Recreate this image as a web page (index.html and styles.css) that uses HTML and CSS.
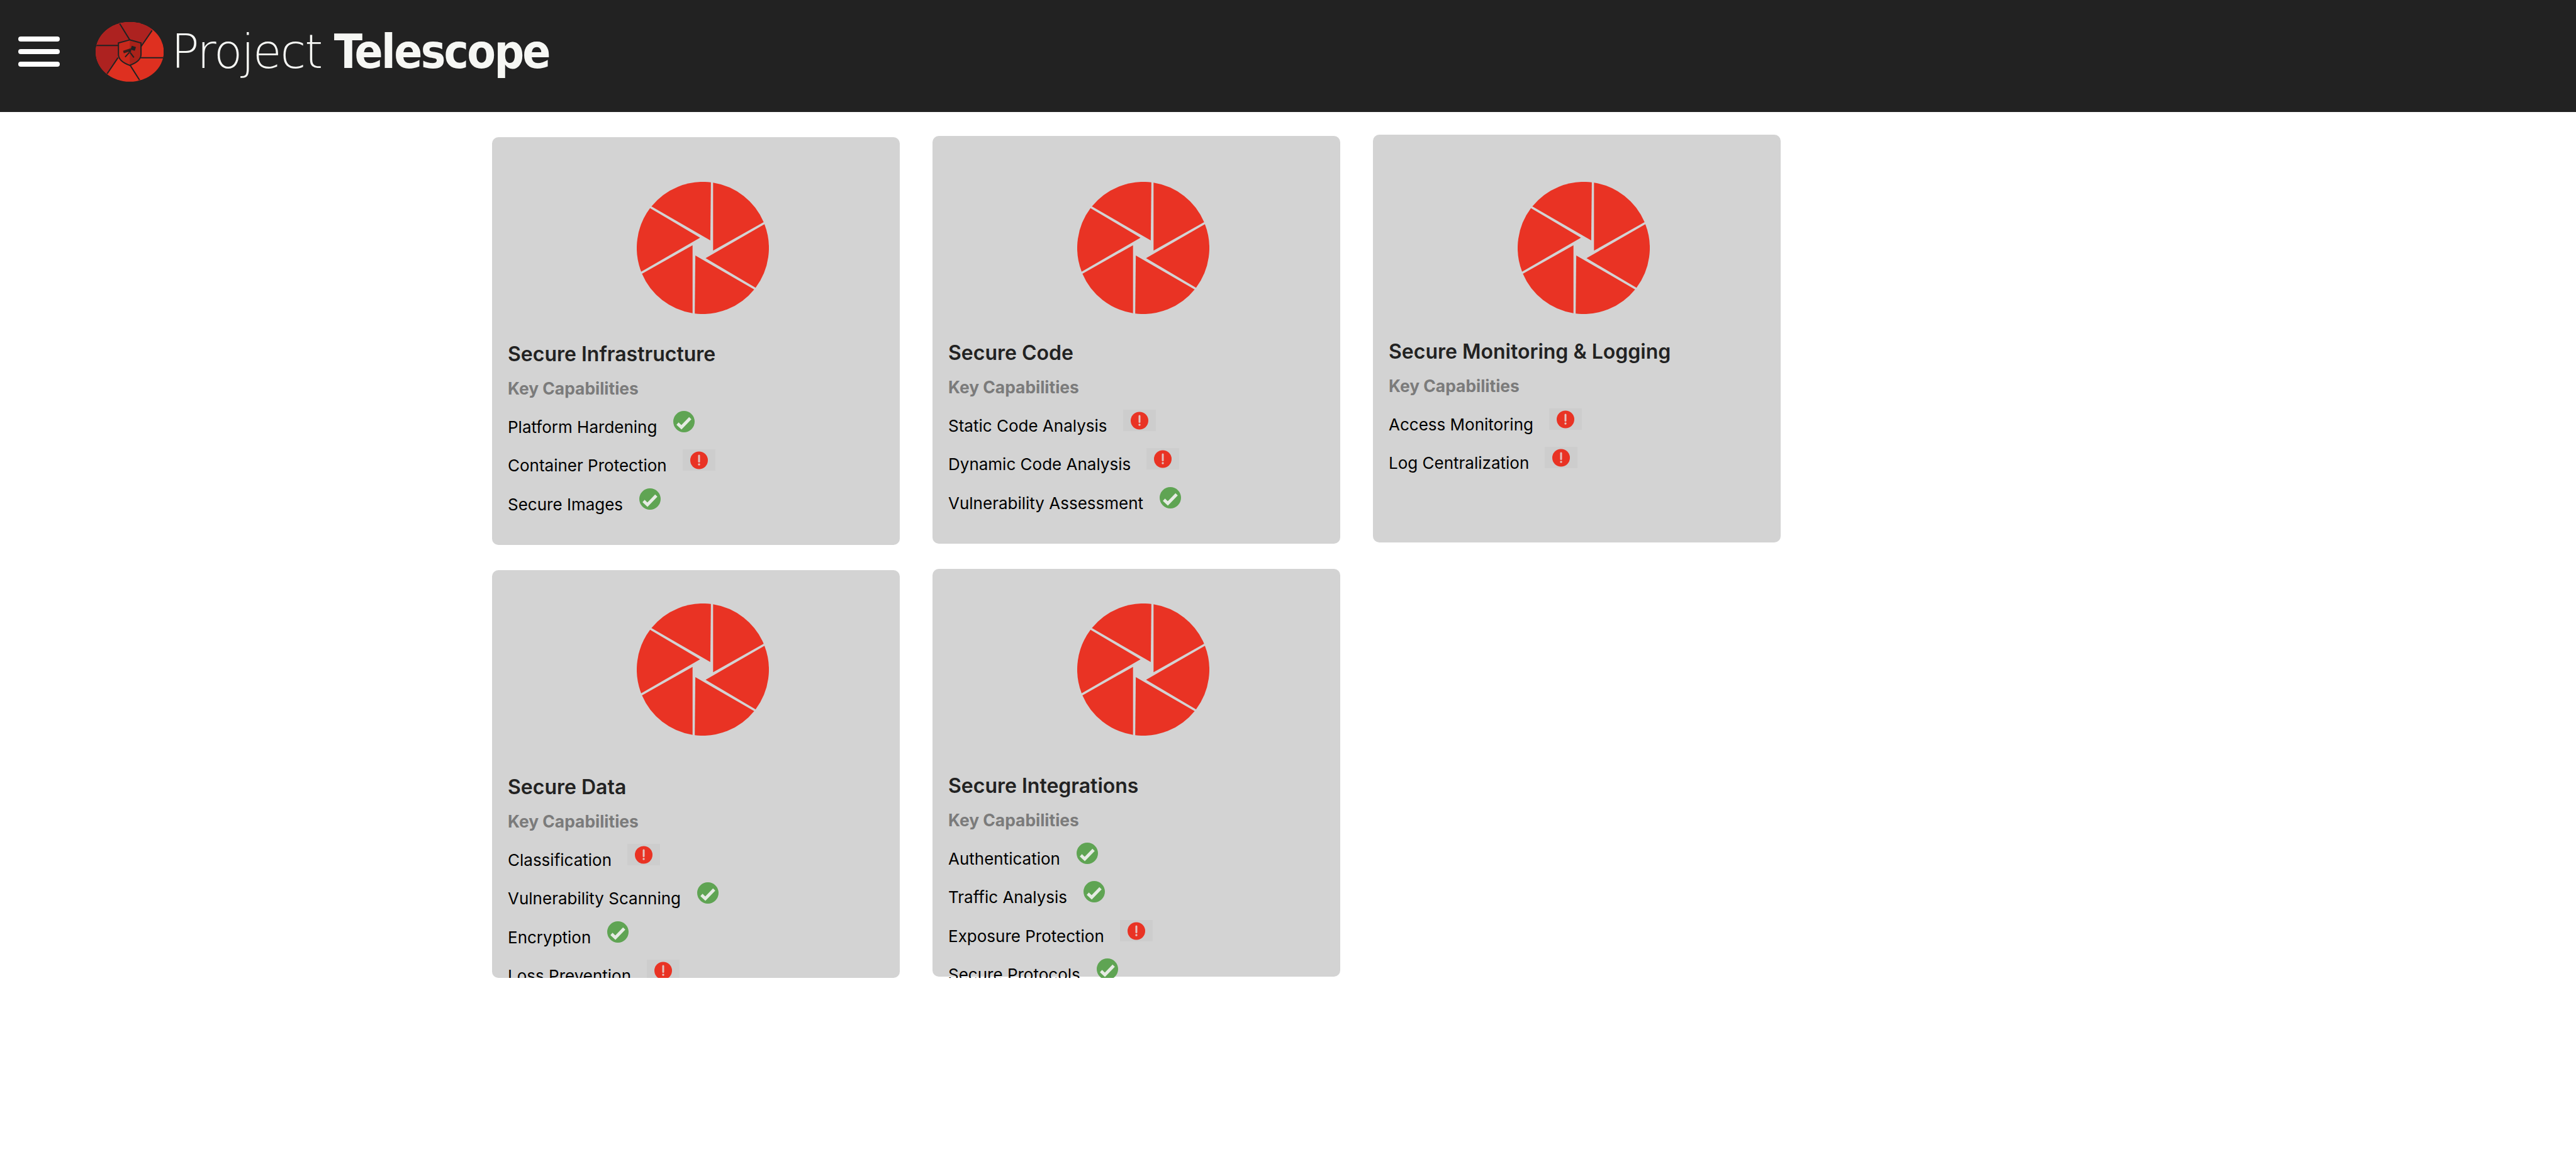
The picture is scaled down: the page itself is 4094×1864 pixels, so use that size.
FILE: index.html
```html
<!DOCTYPE html>
<html lang="en">
<head>
  <meta charset="UTF-8">
  <meta name="viewport" content="width=device-width, initial-scale=1.0">
  <title>Project Telescope</title>
  <link rel="stylesheet" href="styles.css">
</head>
<body>
  <!-- shared icons -->
  <svg class="icon-defs" aria-hidden="true">
    <symbol id="blade" viewBox="-105 -105 210 210">
      <path id="bladeShape" d="M16.3 4.3V-103.7A105 105 0 0 1 96.7 -41Z"/>
      <use href="#bladeShape" transform="rotate(60)"/>
      <use href="#bladeShape" transform="rotate(120)"/>
      <use href="#bladeShape" transform="rotate(180)"/>
      <use href="#bladeShape" transform="rotate(240)"/>
      <use href="#bladeShape" transform="rotate(300)"/>
    </symbol>
    <symbol id="ok" viewBox="0 0 34 34">
      <circle cx="17" cy="17" r="17" fill="#5fa453"/>
      <path d="M6.8 20.2L13 26L27 11.5" fill="none" stroke="#e6ebe4" stroke-width="5"/>
    </symbol>
    <symbol id="bad" viewBox="0 0 52 34">
      <circle cx="26" cy="17.5" r="14" fill="#e93324"/>
      <path d="M26 10V19.5" stroke="#e4c4c0" stroke-width="3" stroke-linecap="round"/>
      <circle cx="26" cy="24" r="1.7" fill="#e4c4c0"/>
    </symbol>
  </svg>

  <header class="topbar">
    <button class="menu-btn" aria-label="Menu"><span></span><span></span><span></span></button>
    <svg class="logo" viewBox="65 45 325 285">
      <defs>
        <clipPath id="logoClip"><ellipse cx="228" cy="187" rx="163" ry="143"/></clipPath>
      </defs>
      <g clip-path="url(#logoClip)">
        <rect x="60" y="40" width="335" height="295" fill="#de3020"/>
        <path d="M120 292L172 215V157L228 130L280 165L335 85L340 40H60V292Z" fill="#ad2220"/>
        <path d="M180 52L228 130M335 85L280 165M395 215H280M275 322L228 248M120 292L172 215M65 157H175" stroke="#222" stroke-width="6" fill="none"/>
      </g>
      <path d="M228 130L174 145V200C174 225 205 243 228 252V130Z" fill="#c9291c"/>
      <path d="M228 130L282 145V200C282 225 251 243 228 252V130Z" fill="#aa2219"/>
      <path d="M228 130L174 145V200C174 225 205 243 228 252C251 243 282 225 282 200V145Z" fill="none" stroke="#222" stroke-width="6"/>
      <path d="M196 182L232 170L236 182L200 194Z" fill="#3a1f1c"/>
      <path d="M238 158L258 164L252 182L232 176Z" fill="#222"/>
      <path d="M226 190L206 212M230 190L248 214" stroke="#222" stroke-width="6" fill="none"/>
      <circle cx="228" cy="184" r="6" fill="#222"/>
    </svg>
    <div class="brand"><span class="brand-light">Project</span> <span class="brand-bold">Telescope</span></div>
  </header>

  <main class="cards">
    <section class="card">
      <svg class="shutter"><use href="#blade"/></svg>
      <h3>Secure Infrastructure</h3>
      <h4>Key Capabilities</h4>
      <ul>
        <li>Platform Hardening <svg class="ok"><use href="#ok"/></svg></li>
        <li>Container Protection <svg class="bad"><use href="#bad"/></svg></li>
        <li>Secure Images <svg class="ok"><use href="#ok"/></svg></li>
      </ul>
    </section>
    <section class="card col2">
      <svg class="shutter"><use href="#blade"/></svg>
      <h3>Secure Code</h3>
      <h4>Key Capabilities</h4>
      <ul>
        <li>Static Code Analysis <svg class="bad"><use href="#bad"/></svg></li>
        <li>Dynamic Code Analysis <svg class="bad"><use href="#bad"/></svg></li>
        <li>Vulnerability Assessment <svg class="ok"><use href="#ok"/></svg></li>
      </ul>
    </section>
    <section class="card col3">
      <svg class="shutter"><use href="#blade"/></svg>
      <h3>Secure Monitoring &amp; Logging</h3>
      <h4>Key Capabilities</h4>
      <ul>
        <li>Access Monitoring <svg class="bad"><use href="#bad"/></svg></li>
        <li>Log Centralization <svg class="bad"><use href="#bad"/></svg></li>
      </ul>
    </section>
    <section class="card row2">
      <svg class="shutter"><use href="#blade"/></svg>
      <h3>Secure Data</h3>
      <h4>Key Capabilities</h4>
      <ul>
        <li>Classification <svg class="bad"><use href="#bad"/></svg></li>
        <li>Vulnerability Scanning <svg class="ok"><use href="#ok"/></svg></li>
        <li>Encryption <svg class="ok"><use href="#ok"/></svg></li>
        <li>Loss Prevention <svg class="bad"><use href="#bad"/></svg></li>
      </ul>
    </section>
    <section class="card row2 col2">
      <svg class="shutter"><use href="#blade"/></svg>
      <h3>Secure Integrations</h3>
      <h4>Key Capabilities</h4>
      <ul>
        <li>Authentication <svg class="ok"><use href="#ok"/></svg></li>
        <li>Traffic Analysis <svg class="ok"><use href="#ok"/></svg></li>
        <li>Exposure Protection <svg class="bad"><use href="#bad"/></svg></li>
        <li>Secure Protocols <svg class="ok"><use href="#ok"/></svg></li>
      </ul>
    </section>
  </main>
</body>
</html>
```

FILE: styles.css
```css
body { margin: 0; background: #fff; font-family: Inter, "Liberation Sans", sans-serif; }
.icon-defs { display: block; width: 0; height: 0; }

.topbar {
  display: flex;
  align-items: center;
  height: 178px;
  padding: 0 0 14px 29px;
  box-sizing: border-box;
  background: #222;
}
.menu-btn {
  display: flex;
  flex-direction: column;
  gap: 12px;
  width: 66px;
  padding: 0;
  border: 0;
  background: none;
}
.menu-btn span { display: block; height: 8px; border-radius: 4px; background: #fff; }
.logo { width: 108px; height: 95px; margin-left: 57px; }
.brand { margin-left: 12px; color: #f6f7f4; font-family: "DejaVu Sans", sans-serif; font-size: 74px; line-height: 1; white-space: nowrap; word-spacing: -4px; }
.brand-light { font-weight: 200; letter-spacing: -2px; }
.brand-bold { font-family: "DejaVu Sans Condensed", "DejaVu Sans", sans-serif; font-weight: 700; letter-spacing: -2.7px; }

.cards {
  display: grid;
  grid-template-columns: repeat(3, 648px);
  gap: 40px 52px;
  padding: 40px 0 0 782px;
  align-items: start;
}
.card {
  height: 648px;
  padding: 0 25px;
  border-radius: 10px;
  background: #d3d3d3;
}
.col2 { margin-top: -2px; }
.col3 { margin-top: -4px; }

/* the wheels sit level across a row even though the cards step up */
.shutter { display: block; width: 210px; height: 210px; margin: 71px 0 44px 205px; fill: #e93324; }
.col2 .shutter { margin-top: 73px; margin-bottom: 42px; }
.col3 .shutter { margin-top: 75px; margin-bottom: 40px; }
.row2 .shutter { margin-top: 53px; margin-bottom: 62px; }
.row2.col2 .shutter { margin-top: 55px; margin-bottom: 60px; }

h3 { margin: 0 0 18px; color: #222; font-size: 32px; font-weight: 600; line-height: 40px; }
h4 { margin: 0 0 15px; color: #7b7b7b; font-size: 26.4px; font-weight: 700; line-height: 32px; }
ul { margin: 0; padding: 0; list-style: none; }
li { display: flex; align-items: flex-start; height: 61.3px; color: #000; font-size: 26px; line-height: 61px; white-space: nowrap; }
.ok { width: 34px; height: 34px; margin: 5px 0 0 26px; }
.bad { width: 52px; height: 34px; margin: 5px 0 0 25px; background: #cdcdcd; }
```
